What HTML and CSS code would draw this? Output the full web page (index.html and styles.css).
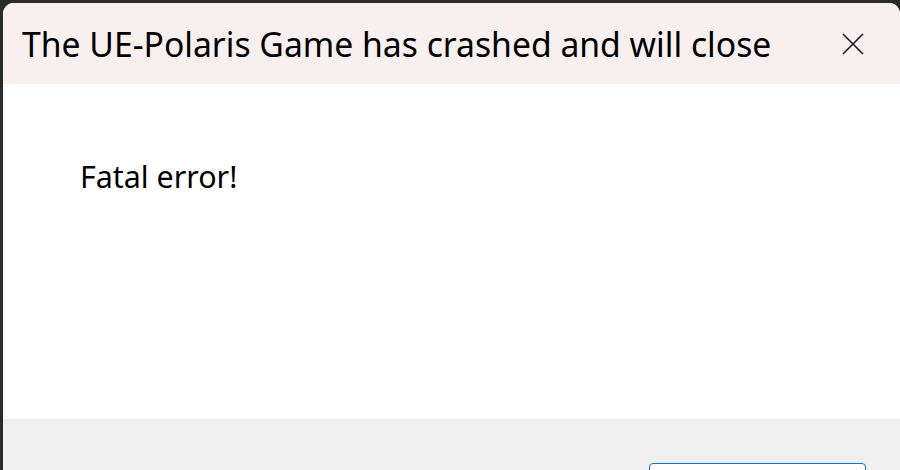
FILE: index.html
```html
<!DOCTYPE html>
<html>
<head>
<meta charset="utf-8">
<link rel="stylesheet" href="styles.css">
</head>
<body>
<div class="window">
  <div class="titlebar">
    <div class="title">The UE-Polaris Game has crashed and will close</div>
    <button class="close" aria-label="Close">
      <svg width="22" height="22" viewBox="0 0 22 22"><path d="M1 1 L21 21 M21 1 L1 21" stroke="#1c1c1c" stroke-width="1.6" fill="none"/></svg>
    </button>
  </div>
  <div class="content">
    <div class="message">Fatal error!</div>
  </div>
  <div class="footer">
    <button class="ok"></button>
  </div>
</div>
</body>
</html>
```
FILE: styles.css
```css
html, body {
  margin: 0;
  padding: 0;
  height: 100%;
  overflow: hidden;
}
body {
  background: #2b2b2b;
  font-family: "Noto Sans", "Open Sans", sans-serif;
  padding: 3px 0 0 3px;
  box-sizing: border-box;
}
.window {
  height: 100%;
  background: #ffffff;
  border-radius: 11px 11px 0 0;
  overflow: hidden;
  display: flex;
  flex-direction: column;
}
.titlebar {
  height: 81px;
  flex: none;
  background: #f7f0ee;
  display: flex;
  align-items: center;
  padding-left: 19px;
}
.title {
  flex: 1;
  font-size: 33.7px;
  line-height: 40px;
  color: #000;
  white-space: nowrap;
}
.close {
  flex: none;
  width: 60px;
  height: 60px;
  margin-right: 17px;
  border: none;
  background: transparent;
  padding: 0;
  display: flex;
  align-items: center;
  justify-content: center;
}
.content {
  height: 335px;
  flex: none;
  padding: 73px 0 0 77px;
  box-sizing: border-box;
}
.message {
  font-size: 30.4px;
  line-height: 40px;
  color: #000;
}
.footer {
  flex: 1;
  background: #efefef;
  padding: 44px 0 0 646px;
}
.ok {
  width: 217px;
  height: 36px;
  border: 1.5px solid #1a6fc7;
  border-radius: 4px;
  background: #fdfdfd;
  display: block;
}
```
